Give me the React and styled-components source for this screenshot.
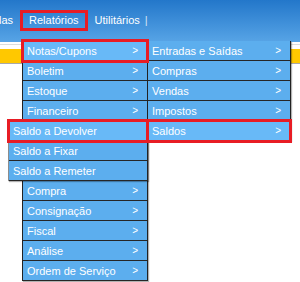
import React from "react"
import styled, { createGlobalStyle, css } from "styled-components"

const GlobalStyle = createGlobalStyle`
  html, body {
    margin: 0;
    padding: 0;
    background: #ffffff;
  }
  body {
    width: 300px;
    height: 282px;
    overflow: hidden;
    font-family: "Liberation Sans", Arial, sans-serif;
  }
`

const notas = [
  { label: "Entradas e Saídas" },
  { label: "Compras" },
  { label: "Vendas" },
  { label: "Impostos" },
  { label: "Saldos", active: true },
]

const saldos = [
  { label: "Saldo a Devolver", active: true },
  { label: "Saldo a Fixar" },
  { label: "Saldo a Remeter" },
]

// rows 5-7 sit under the Saldos sub-menu, so their labels are never seen
const relatorios = [
  { label: "Notas/Cupons", active: true },
  { label: "Boletim" },
  { label: "Estoque" },
  { label: "Financeiro" },
  { label: "", hidden: true },
  { label: "", hidden: true },
  { label: "", hidden: true },
  { label: "Compra" },
  { label: "Consignação" },
  { label: "Fiscal" },
  { label: "Análise" },
  { label: "Ordem de Serviço" },
]

const App = () => {
  return (
    <Wrapper>
      <GlobalStyle />
      <TopBar>
        <NavList>
          <NavItem $offset>Entradas</NavItem>
          <NavItem $active>
            Relatórios
            <Menu $top={30} $left={1} $width={126}>
              {relatorios.map((item, i) => (
                <Row key={i} $active={item.active}>
                  <span>{item.label}</span>
                  {!item.hidden && <Arrow>&gt;</Arrow>}
                </Row>
              ))}
            </Menu>
            <Menu $top={30} $left={126} $width={144}>
              {notas.map((item) => (
                <Row key={item.label} $active={item.active}>
                  <span>{item.label}</span>
                  <Arrow>&gt;</Arrow>
                </Row>
              ))}
            </Menu>
            <Menu $top={110} $left={-13} $width={140} $soft>
              {saldos.map((item) => (
                <Row key={item.label} $active={item.active}>
                  <span>{item.label}</span>
                </Row>
              ))}
            </Menu>
          </NavItem>
          <NavItem $tight>Utilitários</NavItem>
          <Divider>|</Divider>
        </NavList>
      </TopBar>
      <Gap />
      <YellowBar />
    </Wrapper>
  )
}

const Wrapper = styled.div`
  width: 300px;
  height: 282px;
  overflow: hidden;
  position: relative;
`

const TopBar = styled.header`
  height: 42px;
  background: linear-gradient(#2377ca, #57a4e6);
  border-bottom: 2px solid #ffffff;
  box-sizing: content-box;
`

const NavList = styled.nav`
  display: flex;
  align-items: center;
  padding-top: 11px;
  color: #ffffff;
  font-size: 11px;
`

const NavItem = styled.div`
  position: relative;
  height: 19px;
  line-height: 19px;
  padding: 0 8px;
  white-space: nowrap;
  ${(p) =>
    p.$offset &&
    css`
      margin-left: -39px;
    `}
  ${(p) =>
    p.$tight &&
    css`
      padding-right: 5px;
    `}
  ${(p) =>
    p.$active &&
    css`
      outline: 3px solid #e81c24;
      outline-offset: -2px;
      z-index: 2;
    `}
`

const Divider = styled.span`
  color: #d7e4f4;
  line-height: 19px;
`

const Gap = styled.div`
  height: 4px;
  border-top: 1px solid #dcdcdc;
`

const YellowBar = styled.div`
  height: 14px;
  background: #ffc800;
  border-bottom: 1px solid #a8a8a8;
`

const Menu = styled.ul`
  position: absolute;
  top: ${(p) => p.$top}px;
  left: ${(p) => p.$left}px;
  width: ${(p) => p.$width}px;
  margin: 0;
  padding: 0;
  list-style: none;
  box-sizing: border-box;
  border-left: 1px solid ${(p) => (p.$soft ? "#8c8c8c" : "#222222")};
  border-right: 1px solid #222222;
  box-shadow: 1px 1px 1px rgba(0, 0, 0, 0.3);
`

const Row = styled.li`
  position: relative;
  display: flex;
  justify-content: space-between;
  align-items: center;
  height: 20px;
  box-sizing: border-box;
  padding: 1px 9px 0 4px;
  border-bottom: 1px solid #262626;
  background: ${(p) => (p.$active ? "#68b9f7" : "#5caeee")};
  color: #ffffff;
  font-size: 11px;
  line-height: 18px;
  white-space: nowrap;
  ${(p) =>
    p.$active &&
    css`
      outline: 3px solid #e81c24;
      outline-offset: -1px;
      z-index: 1;
    `}
`

const Arrow = styled.span`
  font-size: 10px;
`

export default App
